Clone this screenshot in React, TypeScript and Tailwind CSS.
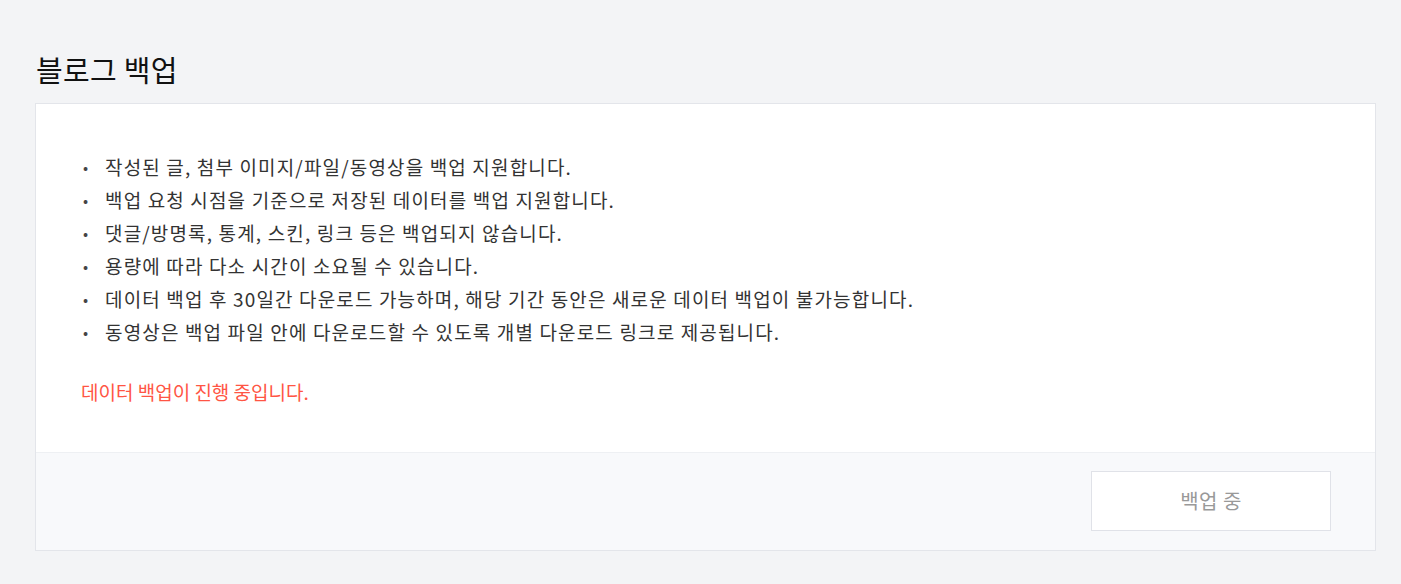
const notices = [
  "작성된 글, 첨부 이미지/파일/동영상을 백업 지원합니다.",
  "백업 요청 시점을 기준으로 저장된 데이터를 백업 지원합니다.",
  "댓글/방명록, 통계, 스킨, 링크 등은 백업되지 않습니다.",
  "용량에 따라 다소 시간이 소요될 수 있습니다.",
  "데이터 백업 후 30일간 다운로드 가능하며, 해당 기간 동안은 새로운 데이터 백업이 불가능합니다.",
  "동영상은 백업 파일 안에 다운로드할 수 있도록 개별 다운로드 링크로 제공됩니다.",
];

export default function App() {
  return (
    <div
      className="min-h-[584px] bg-[#f3f4f6] pl-[35px] pr-[25px] pt-[50px] pb-[33px]"
      style={{ fontFamily: '"Noto Sans CJK KR", "Noto Sans", sans-serif' }}
    >
      <h2 className="mb-[15px] pl-[1px] text-[29px] leading-[38px] font-normal tracking-[0.3px] text-[#111]">
        블로그 백업
      </h2>

      <div className="border border-[#e3e5ea] bg-white">
        <div className="px-[45px] pt-[46px] pb-[44px]">
          <ul className="flex flex-col">
            {notices.map((text) => (
              <li key={text} className="flex text-[19px] leading-[33px] tracking-[1.15px] text-[#333]">
                <span className="w-[24px] shrink-0 pl-[2px] text-[15px] text-[#444]">•</span>
                <span>{text}</span>
              </li>
            ))}
          </ul>
          <p className="mt-[27px] text-[19px] leading-[33px] text-[#ff5544]">데이터 백업이 진행 중입니다.</p>
        </div>

        <div className="flex justify-end border-t border-[#eef0f3] bg-[#f8f9fb] px-[44px] pt-[18px] pb-[19px]">
          <button
            disabled
            className="h-[60px] w-[240px] border border-[#e0e2e8] bg-white text-[20px] tracking-[0.5px] text-[#999]"
          >
            백업 중
          </button>
        </div>
      </div>
    </div>
  );
}
